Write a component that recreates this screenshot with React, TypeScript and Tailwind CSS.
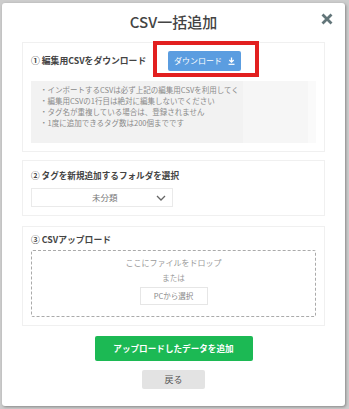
import React from 'react';

const FONT = { fontFamily: '"Noto Sans CJK JP", "Noto Sans", sans-serif' };

const NOTES = [
  '・インポートするCSVは必ず上記の編集用CSVを利用してく',
  '・編集用CSVの1行目は絶対に編集しないでください',
  '・タグ名が重複している場合は、登録されません',
  '・1度に追加できるタグ数は200個までです',
];

const DownloadIcon = () => (
  <svg width="7" height="8" viewBox="0 0 7 8" fill="none">
    <path d="M3.5 0.5v4.5M1.3 3l2.2 2.2L5.7 3" stroke="white" strokeWidth="1.3" />
    <path d="M0.5 7.3h6" stroke="white" strokeWidth="1.2" />
  </svg>
);

const Chevron = () => (
  <svg width="10" height="6" viewBox="0 0 10 6" fill="none">
    <path d="M1 1l4 4 4-4" stroke="#666" strokeWidth="1.3" />
  </svg>
);

const CloseIcon = () => (
  <svg width="12" height="12" viewBox="0 0 12 12" fill="none">
    <path d="M1.5 1.5l9 9M10.5 1.5l-9 9" stroke="#627579" strokeWidth="2.8" />
  </svg>
);

export default function App() {
  return (
    <div className="w-[349px] h-[409px] bg-[#cdcdcd] pl-[2px] pt-[3px] overflow-hidden" style={FONT}>
      <div className="w-[343px] h-[403px] bg-white rounded-[3px] shadow-[1px_1px_3px_rgba(0,0,0,0.35)] px-5 pt-[9px]">
        {/* header */}
        <div className="relative h-[20px] flex items-center justify-center">
          <h1 className="text-[15px] leading-[20px] font-medium text-[#444]">CSV一括追加</h1>
          <button className="absolute right-[-8px] top-[1px]">
            <CloseIcon />
          </button>
        </div>

        {/* step 1 */}
        <div className="relative mt-[10px] border border-[#f0f0f0] px-[8px] pt-[8px] pb-[8px]">
          <div className="flex items-center h-[20px]">
            <span className="text-[8.8px] leading-[12px] font-bold text-[#444] w-[137px]">① 編集用CSVをダウンロード</span>
            <button className="w-[73px] h-[20px] bg-[#5b9de0] rounded-[2px] flex items-center justify-center gap-[6px] text-white text-[8px]">
              ダウンロード <DownloadIcon />
            </button>
          </div>
          <div className="mt-[10px] flex h-[62px]">
            <div className="w-[212px] bg-[#f2f2f2] pl-[9px] pt-[3px]">
              {NOTES.map(n => (
                <p key={n} className="text-[7.5px] leading-[11px] text-[#8a8a8a] whitespace-nowrap">{n}</p>
              ))}
            </div>
            <div className="w-[65px] bg-[#f6f6f6]" />
            <div className="flex-1 bg-[#fafafa]" />
          </div>
          <div className="absolute left-[130px] top-[-2px] w-[106px] h-[36px] border-[4px] border-[#e21f1f]" />
        </div>

        {/* step 2 */}
        <div className="mt-[8px] border border-[#f0f0f0] px-[8px] pt-[8px] pb-[8px]">
          <p className="text-[8.6px] leading-[12px] font-bold text-[#444]">② タグを新規追加するフォルダを選択</p>
          <div className="mt-[7px] w-[142px] h-[19px] border border-[#eaeaea] flex items-center pl-[60px] pr-[6px] justify-between">
            <span className="text-[8.5px] text-[#777]">未分類</span>
            <Chevron />
          </div>
        </div>

        {/* step 3 */}
        <div className="mt-[10px] border border-[#f0f0f0] px-[8px] pt-[7px] pb-[8px]">
          <p className="text-[8.8px] leading-[12px] font-bold text-[#444]">③ CSVアップロード</p>
          <div className="mt-[4px] h-[67px] border border-dashed border-[#aaa] rounded-[2px] flex flex-col items-center pt-[6px]">
            <p className="text-[8px] leading-[12px] text-[#999]">ここにファイルをドロップ</p>
            <p className="mt-[3px] text-[7.5px] leading-[12px] text-[#999]">または</p>
            <button className="mt-[3px] w-[68px] h-[18px] border border-[#e6e6e6] text-[7.5px] text-[#888]">PCから選択</button>
          </div>
        </div>

        {/* actions */}
        <div className="flex flex-col items-center">
          <button className="mt-[10px] w-[158px] h-[25px] bg-[#1cb954] rounded-[2px] text-white text-[8.6px] font-bold">
            アップロードしたデータを追加
          </button>
          <button className="mt-[9px] w-[63px] h-[19px] bg-[#e3e3e3] rounded-[2px] text-[#555] text-[9px]">
            戻る
          </button>
        </div>
      </div>
    </div>
  );
}
